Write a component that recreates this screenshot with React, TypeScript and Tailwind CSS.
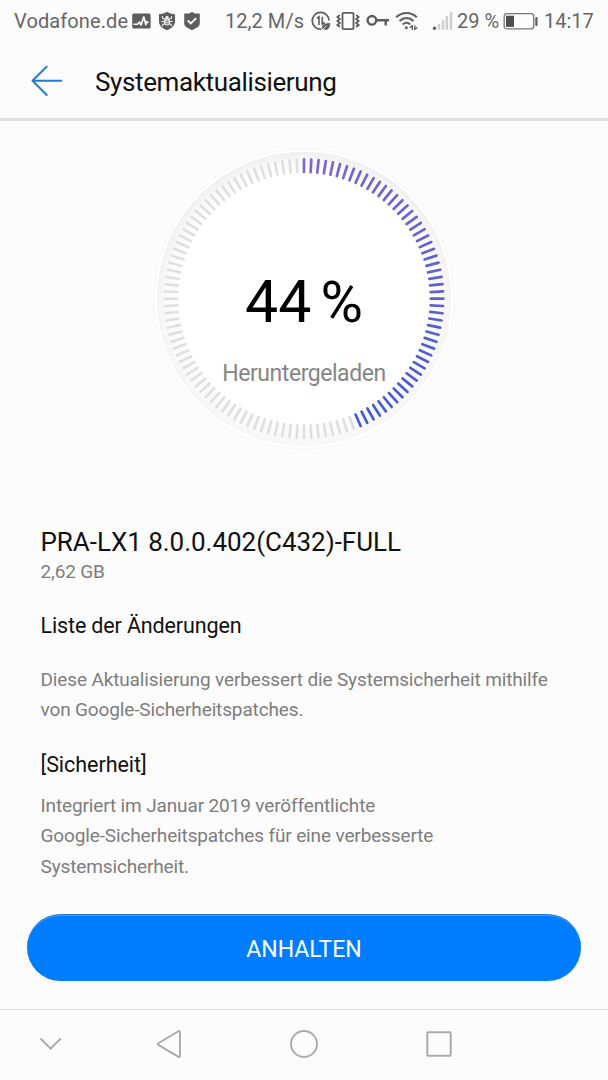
const TICKS = 120;
const progress = 44;

const START = [126, 103, 206];
const END = [68, 92, 206];

function tickColor(i: number, active: number) {
  const t = i / (active - 1);
  const [r, g, b] = START.map((c, n) => Math.round(c + (END[n] - c) * t));
  return `rgb(${r}, ${g}, ${b})`;
}

function ActivityIcon() {
  return (
    <svg width="19" height="16" viewBox="0 0 19 16" fill="none">
      <rect x="0.2" y="0.4" width="18.4" height="15.2" rx="1.6" fill="#5d5d5d" />
      <path
        d="M1.500 11.300h4L7.500 9l1.600 3L11.800 3.800l2 8 .9-3.300 1.700 1.300"
        stroke="#fcfcfc"
        strokeWidth="1.6"
        strokeLinejoin="round"
      />
    </svg>
  );
}

function BugShieldIcon() {
  return (
    <svg width="18" height="20" viewBox="0 0 18 20" fill="none">
      <path d="M9 .8c2.300 1.300 4.800 2.200 8 2.500v7c0 4.200-3.400 7.200-8 9-4.600-1.800-8-4.800-8-9v-7C4.200 3 6.700 2.100 9 .8z" fill="#5d5d5d" />
      <ellipse cx="9" cy="10.800" rx="3" ry="3.700" fill="#f0f0f0" />
      <circle cx="9" cy="6.300" r="1.600" fill="#f0f0f0" />
      <path
        d="M7.500 8.500 4.800 7.300 4.300 5M10.500 8.500l2.700-1.200.5-2.300M7 10.500H3.300M11 10.500h3.700M7.300 12.500l-2.500 1-.2 1.800M10.700 12.500l2.500 1 .2 1.800"
        stroke="#f0f0f0"
        strokeWidth="1.100"
      />
      <path d="M9 8v5.500M7 9.700l2 1 2-1M7 12l2 1 2-1" stroke="#5d5d5d" strokeWidth="0.600" />
    </svg>
  );
}

function CheckShieldIcon() {
  return (
    <svg width="18" height="20" viewBox="0 0 18 20" fill="none">
      <path d="M2.200 2.600h3.600L9 1l3.200 1.600h3.600c.6 0 1 .4 1 1v9c0 3-3.800 4.900-7.800 6.700-4-1.800-7.800-3.700-7.800-6.700v-9c0-.6.4-1 1-1z" fill="#5d5d5d" />
      <path d="m4.800 9.500 3 3 5.400-5.400" stroke="#fcfcfc" strokeWidth="1.900" />
    </svg>
  );
}

function DataSaverIcon() {
  return (
    <svg width="20" height="20" viewBox="0 0 20 20" fill="none" stroke="#5d5d5d">
      <path d="M10.200 18.200A8.400 8.400 0 1 1 18 9.500" strokeWidth="1.700" />
      <path d="M6 7.300 8 5.800v8.200M11.300 5.800v8M11 13.700l2.700-2.400" strokeWidth="1.600" />
      <path d="M11.500 18.500c-1.200-4.300 1.600-6 7.300-6.300.3 4.500-2.300 7.600-5.800 5.900" fill="#5d5d5d" strokeWidth="0.600" />
      <path d="m10.800 19.200 5-4.700" stroke="#fcfcfc" strokeWidth="0.800" />
    </svg>
  );
}

function VibrateIcon() {
  return (
    <svg width="24" height="18" viewBox="0 0 24 18" fill="none" stroke="#5d5d5d" strokeWidth="1.800">
      <rect x="6.500" y="0.900" width="11" height="16.200" rx="1.200" />
      <path d="m3.800 3-2.400 2 2.400 2-2.400 2 2.400 2-2.400 2 2.400 2" />
      <path d="m20.200 3 2.400 2-2.400 2 2.400 2-2.400 2 2.400 2-2.400 2" />
    </svg>
  );
}

function KeyIcon() {
  return (
    <svg width="24" height="14" viewBox="0 0 24 14" fill="none" stroke="#5d5d5d" strokeWidth="2.400">
      <circle cx="5.900" cy="6.300" r="4.300" />
      <path d="M10.200 6.300H23M19.700 6.300v5.200" />
    </svg>
  );
}

function WifiIcon() {
  return (
    <svg width="24" height="20" viewBox="0 0 24 20" fill="none" stroke="#5d5d5d" strokeWidth="2">
      <path d="M1.200 6.300c6-5.700 14.600-5.700 20.600 0" />
      <path d="M4.500 10c4.200-4 9.800-4 14 0" />
      <path d="M7.700 13.500c2.300-2.200 5.300-2.200 7.600 0" />
      <circle cx="11.300" cy="16.800" r="1.500" fill="#5d5d5d" stroke="none" />
      <path d="m14.700 16.600 2.600-1.600v4M19.800 14.400v3.900l2.600-1.600" strokeWidth="1.400" />
    </svg>
  );
}

function SignalIcon() {
  return (
    <svg width="21" height="20" viewBox="0 0 21 20">
      <circle cx="2.500" cy="17.200" r="1.700" fill="#5d5d5d" />
      <g fill="#cfcfcf">
        <rect x="5.700" y="13" width="2.500" height="5.800" />
        <rect x="9.700" y="9" width="2.500" height="9.800" />
        <rect x="13.600" y="5" width="2.500" height="13.800" />
        <rect x="17.700" y="1" width="2.600" height="17.800" />
      </g>
    </svg>
  );
}

function BatteryIcon() {
  return (
    <svg width="36" height="17" viewBox="0 0 36 17" fill="none">
      <rect x="1.200" y="0.700" width="29.500" height="15.200" rx="2.600" stroke="#777" strokeWidth="1.300" />
      <rect x="3" y="2.700" width="8" height="11.200" fill="#4f4f4f" />
      <rect x="32.300" y="4" width="2.200" height="9" rx="1" fill="#5d5d5d" />
    </svg>
  );
}

function StatusBar() {
  return (
    <div className="flex h-[42px] items-center text-[20px] whitespace-nowrap text-[#666]">
      <span className="ml-[14px] w-[118px] tracking-[0.1px]">Vodafone.de</span>
      <div className="flex w-[93px] items-center">
        <ActivityIcon />
        <span className="ml-[7px]"><BugShieldIcon /></span>
        <span className="ml-[7px]"><CheckShieldIcon /></span>
      </div>
      <span className="w-[86px] tracking-[0.05px]">12,2 M/s</span>
      <DataSaverIcon />
      <span className="ml-[5px]"><VibrateIcon /></span>
      <span className="ml-[6px]"><KeyIcon /></span>
      <span className="ml-[5px]"><WifiIcon /></span>
      <span className="ml-[13px]"><SignalIcon /></span>
      <span className="ml-[4px] w-[46px]">29 %</span>
      <BatteryIcon />
      <span className="ml-[5px]">14:17</span>
    </div>
  );
}

function Header() {
  return (
    <header className="flex h-[79px] items-center border-b-[3px] border-[#e1e1e1]">
      <svg className="mt-[2px] ml-[31px]" width="32" height="32" viewBox="0 0 32 32" fill="none" stroke="#1a7cdb" strokeWidth="2" strokeLinecap="round" strokeLinejoin="round">
        <path d="M15.700 1.600 1.500 15.800 15.700 30M1.500 15.800h28.800" />
      </svg>
      <h1 className="ml-[32px] pt-[4px] text-[26px] leading-[30px] tracking-[-0.37px] text-[#111]">Systemaktualisierung</h1>
    </header>
  );
}

function ProgressDial({ value }: { value: number }) {
  const active = Math.round((TICKS * value) / 100);
  return (
    <div className="mx-auto mt-[25px] grid h-[306px] w-[306px]">
      <svg className="col-start-1 row-start-1" width="306" height="306" viewBox="0 0 306 306">
        <defs>
          <radialGradient id="rim">
            <stop offset="0.86" stopColor="#ffffff" />
            <stop offset="0.93" stopColor="#fafafa" />
            <stop offset="1" stopColor="#efefef" />
          </radialGradient>
          <linearGradient id="fade" x1="0" y1="0" x2="0" y2="1">
            <stop offset="0.1" stopColor="#fafafa" stopOpacity="0" />
            <stop offset="0.6" stopColor="#fafafa" stopOpacity="0.5" />
            <stop offset="1" stopColor="#fafafa" stopOpacity="0.700" />
          </linearGradient>
        </defs>
        <circle cx="153" cy="152.700" r="150" fill="#fff" stroke="#f6f6f6" />
        <circle cx="153" cy="152.700" r="147" fill="url(#rim)" />
        <circle cx="153" cy="152.700" r="147" fill="url(#fade)" />
        <circle cx="153" cy="152.700" r="126" fill="#fff" />
        {Array.from({ length: TICKS }, (_, i) => (
          <line
            key={i}
            x1="153"
            x2="153"
            y1="13.400"
            y2="25.900"
            stroke={i < active ? tickColor(i, active) : "#dfdfdf"}
            strokeWidth={i < active ? 2.7 : 2.5}
            strokeLinecap="round"
            transform={`rotate(${i * 3} 153 152.7)`}
          />
        ))}
      </svg>
      <div className="col-start-1 row-start-1 flex flex-col items-center pt-[121px]">
        <div className="flex h-[70px] items-center gap-[9px] text-[59px] leading-[70px] text-black">
          <span>44</span>
          <span className="text-[58px]">%</span>
        </div>
        <div className="mt-[23px] text-[23px] leading-[28px] tracking-[-0.45px] text-[#858585]">Heruntergeladen</div>
      </div>
    </div>
  );
}

function Changelog() {
  return (
    <main className="ml-[40.500px] text-[19px] leading-[30.4px] tracking-[-0.135px] whitespace-nowrap text-[#7d7d7d]">
      <h2 className="mt-[74px] text-[26px] leading-[32px] tracking-[-0.03px] text-[#111]">PRA-LX1 8.0.0.402(C432)-FULL</h2>
      <p className="leading-[28px]">2,62 GB</p>
      <h3 className="mt-[26px] text-[21.5px] leading-[28px] text-[#111]">Liste der Änderungen</h3>
      <p className="mt-[25px]">
        Diese Aktualisierung verbessert die Systemsicherheit mithilfe
        <br />
        von Google-Sicherheitspatches.
      </p>
      <h3 className="mt-[24px] text-[21.5px] leading-[30px] tracking-[-0.05px] text-[#111]">[Sicherheit]</h3>
      <p className="mt-[11px]">
        Integriert im Januar 2019 veröffentlichte
        <br />
        Google-Sicherheitspatches für eine verbesserte
        <br />
        Systemsicherheit.
      </p>
    </main>
  );
}

function NavBar() {
  return (
    <nav className="mt-auto flex h-[71px] items-center border-t border-[#dedede] pb-[2px]">
      <svg className="ml-[39px]" width="24" height="28" viewBox="0 0 24 28" fill="none" stroke="#aaa" strokeWidth="1.900" strokeLinecap="round">
        <path d="m2 9 9.600 9.600L21.200 9" />
      </svg>
      <svg className="ml-[93px]" width="26" height="30" viewBox="0 0 26 30" fill="none" stroke="#aaa" strokeWidth="1.900" strokeLinejoin="round">
        <path d="M23.900 2.900v24.200c0 .8-.8 1.200-1.500.8L2.400 15.900c-.7-.4-.7-1.300 0-1.700l20-12c.7-.4 1.500 0 1.500.7z" />
      </svg>
      <svg className="ml-[107px]" width="30" height="30" viewBox="0 0 30 30" fill="none" stroke="#aaa" strokeWidth="1.900">
        <circle cx="15" cy="15" r="13" />
      </svg>
      <svg className="ml-[107px]" width="26" height="26" viewBox="0 0 26 26" fill="none" stroke="#aaa" strokeWidth="2">
        <rect x="1.300" y="1.300" width="23.400" height="23.400" rx="1" />
      </svg>
    </nav>
  );
}

export default function App() {
  return (
    <div className="flex h-[1080px] w-[608px] flex-col overflow-hidden bg-[#fcfcfc] font-['Roboto',sans-serif]">
      <StatusBar />
      <Header />
      <ProgressDial value={progress} />
      <Changelog />
      <button className="mt-[32px] ml-[27px] h-[67px] w-[554px] shrink-0 rounded-full border-t border-[#2a79cf] bg-[#007dff] pt-[4px] text-[23px] text-white shadow-[inset_0_1px_0_#3f9bff]">
        ANHALTEN
      </button>
      <NavBar />
    </div>
  );
}
